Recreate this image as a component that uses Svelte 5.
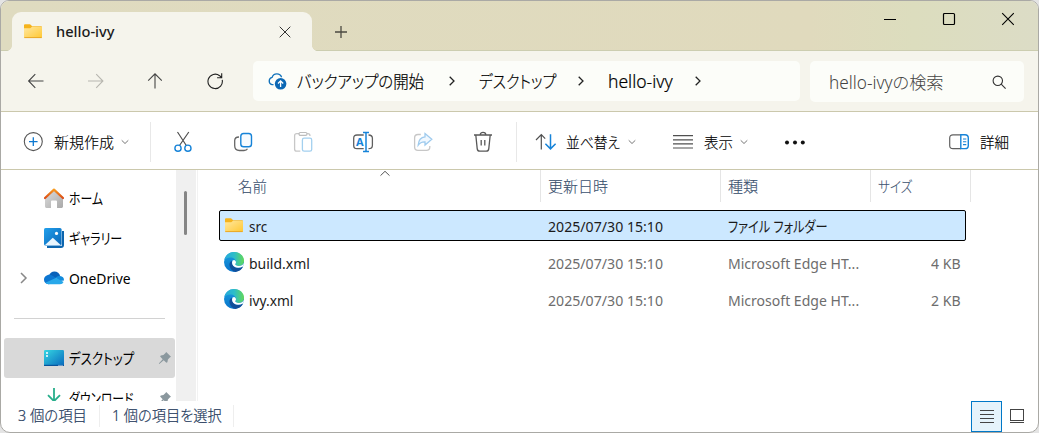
<script>
  const files = [
    { name: 'src', nameWidth: 18, date: '2025/07/30 15:10', type: 'ファイル フォルダー', typeWidth: 100, size: '', icon: 'folder', selected: true },
    { name: 'build.xml', nameWidth: 60.5, date: '2025/07/30 15:10', type: 'Microsoft Edge HT...', typeWidth: 131, size: '4 KB', icon: 'edge' },
    { name: 'ivy.xml', nameWidth: 44, date: '2025/07/30 15:10', type: 'Microsoft Edge HT...', typeWidth: 131, size: '2 KB', icon: 'edge' }
  ];

  function fit(node, width) {
    const natural = node.offsetWidth;
    if (natural) node.style.transform = `scaleX(${width / natural})`;
  }
</script>

{#snippet label(text, width)}
  <span class="label" style="width: {width}px"><span class="glyphs" use:fit={width}>{text}</span></span>
{/snippet}

{#snippet folder()}
  <svg width="20" height="20" viewBox="0 0 20 20">
    <path d="M1 3.2Q1 2.2 2 2.2H6.6Q7.3 2.2 8 3L9 4.2H18Q19 4.2 19 5V8H1Z" fill="#f5b31c" />
    <path d="M1 6.2H7.3L9 4.8H18.2Q19 4.8 19 5.6V15.2Q19 16 18.2 16H1.8Q1 16 1 15.2Z" fill="url(#folderFill)" />
    <path d="M1.3 15.6H18.7" stroke="#e6a323" stroke-width=".9" />
  </svg>
{/snippet}

{#snippet edge()}
  <svg class="edge" width="20" height="20" viewBox="0 0 20 20">
    <circle cx="10" cy="10" r="10" fill="url(#edgeBlue)" />
    <path d="M.3 8.2C1.2 3.2 5.2 0 10.1 0C16 0 20 4.1 20 8.6C20 12 17.6 14 14.8 14C12.4 14 11.2 13 11.2 12.3C11.2 11.8 12 11.5 12 10C12 7.5 9.4 5.5 6.5 5.5C3.6 5.5 1.3 6.8.3 8.2Z" fill="url(#edgeGreen)" />
    <path d="M7.8 8.5C5.5 10 5 12.4 5.8 14.7C6.7 17.4 9 19.4 11.6 19.9C14.8 19.6 17.3 17.9 18.8 15.3C18.9 14.8 18.5 14.7 18 15C13 17.6 7.6 14.7 7.8 8.5Z" fill="#104f9b" />
    <path d="M8.6 8.4Q7.6 10.4 8.3 12.2Q9.7 15.6 14 15.8Q16.4 15.9 18.4 14.8L19.3 14L20 11Q18.4 14 14.8 14C12.4 14 11.2 13 11.2 12.3C11.2 11.8 12 11.5 12 10Q11.7 8.5 10.2 7.9Z" fill="#fff" />
  </svg>
{/snippet}

{#snippet pin()}
  <svg class="pin" width="14" height="14" viewBox="0 0 14 14">
    <path d="M8.2 1L13 5.8L11.8 6.6L9.9 8.6L9.4 11.2L8.4 11.8L5.7 9.2L1.3 13L.8 12.6L4.7 8.2L2.1 5.6L2.8 4.6L5.4 4.1L7.5 2Z" fill="#8b989e" />
  </svg>
{/snippet}

{#snippet chevronDown()}
  <svg class="down" width="10" height="8" viewBox="0 0 10 8"><path d="M1.7 2.3L5 5.5L8.3 2.3" stroke="#777" /></svg>
{/snippet}

{#snippet chevronRight()}
  <svg class="crumb-chevron" width="10" height="12" viewBox="0 0 10 12"><path d="M2.7 1.7L7 6L2.7 10.3" stroke="#222" stroke-width="1.3" /></svg>
{/snippet}

<svg class="defs" width="0" height="0">
  <defs>
    <linearGradient id="folderFill" x1="0" y1="0" x2="1" y2="1"><stop stop-color="#ffe7a0" /><stop offset="1" stop-color="#ffc832" /></linearGradient>
    <linearGradient id="edgeBlue" x1="0" y1="0" x2="0" y2="1"><stop stop-color="#1ba0df" /><stop offset="1" stop-color="#0872ca" /></linearGradient>
    <linearGradient id="edgeGreen"><stop stop-color="#26a9dc" /><stop offset=".5" stop-color="#2dbdc9" /><stop offset="1" stop-color="#63d957" /></linearGradient>
    <linearGradient id="homeFill" x1="0" y1="0" x2="1" y2="1"><stop stop-color="#dedede" /><stop offset="1" stop-color="#a9a9a9" /></linearGradient>
    <linearGradient id="roofFill" x1="0" y1="0" x2="0" y2="1"><stop stop-color="#f79a20" /><stop offset="1" stop-color="#dc4c16" /></linearGradient>
    <linearGradient id="photoFill" x1="0" y1="0" x2="1" y2="1"><stop stop-color="#22a0ec" /><stop offset="1" stop-color="#0965b7" /></linearGradient>
    <linearGradient id="deskFill" x1="0" y1="0" x2="1" y2="1"><stop stop-color="#35d6e2" /><stop offset="1" stop-color="#0868bd" /></linearGradient>
  </defs>
</svg>

<div class="window">
  <header class="titlebar">
    <div class="tab">
      {@render folder()}
      <span class="tab-title">{@render label('hello-ivy', 58.5)}</span>
      <svg width="12" height="12" viewBox="0 0 12 12"><path d="M.7 .7L11.3 11.3M11.3 .7L.7 11.3" stroke="#333" /></svg>
    </div>
    <svg class="add" width="14" height="14" viewBox="0 0 14 14"><path d="M7 1V13M1 7H13" stroke="#4b4a41" stroke-width="1.3" /></svg>
    <div class="controls">
      <svg width="14" height="14" viewBox="0 0 14 14"><path d="M1 7.5H13" stroke="#000" /></svg>
      <svg width="14" height="14" viewBox="0 0 14 14"><rect x="1.5" y="1.5" width="11" height="11" rx="1" stroke="#000" stroke-width="1.2" /></svg>
      <svg width="14" height="14" viewBox="0 0 14 14"><path d="M1.2 1.2L12.8 12.8M12.8 1.2L1.2 12.8" stroke="#000" stroke-width="1.1" /></svg>
    </div>
  </header>

  <nav class="navbar">
    <div class="nav-icons">
      <svg width="18" height="18" viewBox="0 0 18 18"><path d="M16.5 9H2M8.3 2.2L1.6 9L8.3 15.8" stroke="#444" stroke-width="1.1" /></svg>
      <svg width="18" height="18" viewBox="0 0 18 18"><path d="M1 9H15.5M9.2 2.2L15.9 9L9.2 15.8" stroke="#b7b6af" stroke-width="1.1" /></svg>
      <svg width="18" height="18" viewBox="0 0 18 18"><path d="M8 16.5V2M1.2 8.6L8 1.8L14.8 8.6" stroke="#444" stroke-width="1.1" /></svg>
      <svg width="18" height="18" viewBox="0 0 18 18"><path d="M15.2 7.8A7.2 7.2 0 1 1 12.6 3.7L14.6 5.5M14.7 1.2V5.7H10.1" stroke="#222" stroke-width="1.1" /></svg>
    </div>
    <div class="address">
      <svg class="cloud" width="20" height="20" viewBox="0 0 20 20">
        <path d="M5.5 13.6H4A3.7 3.7 0 0 1 4.1 6.4A5 5 0 0 1 13.6 6.2" stroke="#1272bb" stroke-width="1.3" />
        <circle cx="12.6" cy="12.8" r="5.8" fill="#0c68b4" />
        <path d="M12.6 16V10.2M10 12.5L12.6 9.9L15.2 12.5" stroke="#fff" stroke-width="1.3" />
      </svg>
      <span class="crumb root">{@render label('バックアップの開始', 127)}</span>
      {@render chevronRight()}
      <span class="crumb">{@render label('デスクトップ', 77)}</span>
      {@render chevronRight()}
      <span class="crumb">{@render label('hello-ivy', 65)}</span>
      {@render chevronRight()}
    </div>
    <div class="search">
      {@render label('hello-ivyの検索', 115)}
      <svg width="16" height="16" viewBox="0 0 16 16"><circle cx="6.8" cy="6.8" r="4.7" stroke="#333" stroke-width="1.1" /><path d="M10.2 10.2L14.6 14.6" stroke="#333" stroke-width="1.1" /></svg>
    </div>
  </nav>

  <div class="toolbar">
    <div class="new">
      <svg width="24" height="24" viewBox="0 0 24 24"><circle cx="12.3" cy="11.6" r="9" stroke="#555" stroke-width="1.1" /><path d="M12.3 7.3V15.9M8 11.6H16.6" stroke="#0c78d0" stroke-width="1.3" /></svg>
      {@render label('新規作成', 60)}
      {@render chevronDown()}
    </div>
    <div class="actions">
      <svg width="24" height="24" viewBox="0 0 24 24"><path d="M6.5 2L15.3 15.5M17.8 2L8.5 15.5" stroke="#505050" stroke-width="1.2" /><circle cx="7" cy="18.2" r="3.1" stroke="#1683d8" stroke-width="1.4" /><circle cx="16.9" cy="18.2" r="3.1" stroke="#1683d8" stroke-width="1.4" /></svg>
      <svg width="24" height="24" viewBox="0 0 24 24"><path d="M8 7C4.7 7 3.7 8 3.7 10.6V15.8C3.7 19.3 5 20.5 8.4 20.5H13C15 20.5 16 19.8 16.5 18.8" stroke="#666" stroke-width="1.3" /><rect x="9.8" y="3.5" width="10.7" height="13.3" rx="2.8" stroke="#1683d8" stroke-width="1.4" fill="#f6fbff" /></svg>
      <svg width="24" height="24" viewBox="0 0 24 24"><path d="M8 3.7H5.7C4.4 3.7 3.6 4.5 3.6 5.7V19C3.6 20.4 4.4 21.2 5.8 21.2H9.3M16 3.7H17C18.4 3.7 19 4.5 19 6" stroke="#c7c7c7" stroke-width="1.3" /><rect x="8" y="2.5" width="8" height="2.9" rx="1.4" stroke="#bdbdbd" stroke-width="1.2" /><rect x="11.4" y="8.2" width="9.3" height="13" rx="1.8" stroke="#a3d0ef" stroke-width="1.3" /></svg>
      <svg width="24" height="24" viewBox="0 0 24 24"><path d="M12.7 5H6C3.8 5 2.7 6.1 2.7 8.2V15.4C2.7 17.6 3.8 18.6 6 18.6H12.7M17.5 5C20.2 5 21.4 6.1 21.4 8.2V15.4C21.4 17.6 20.2 18.6 17.5 18.6" stroke="#606060" stroke-width="1.3" /><path d="M12 2.4H18M12 21.6H18M15 2.4V21.6" stroke="#1683d8" stroke-width="1.5" /><text x="5" y="16" class="rename-a">A</text></svg>
      <svg width="24" height="24" viewBox="0 0 24 24"><path d="M9.8 4.5H7C4.8 4.5 3.6 5.7 3.6 8V17C3.6 19.2 4.8 20.3 7 20.3H15.4C17.6 20.3 18.8 19.2 18.8 17V16" stroke="#c7c7c7" stroke-width="1.3" /><path d="M14 3.6L20.8 9.3L14 15V11.8C10.7 11.6 8.8 12.7 7.2 15.1C7.5 10.4 9.4 7.2 14 6.8Z" stroke="#9fcbee" stroke-width="1.3" fill="#f0f8ff" /></svg>
      <svg width="24" height="24" viewBox="0 0 24 24"><path d="M3 5H21M4.8 5L6.2 18.6C6.4 20.4 7.2 21.2 8.8 21.2H15.2C16.8 21.2 17.6 20.4 17.8 18.6L19.2 5M9.2 4.8C9.2 1.6 14.8 1.6 14.8 4.8M10.2 10V15.5M13.8 10V15.5" stroke="#585858" stroke-width="1.3" /></svg>
    </div>
    <div class="sort">
      <svg width="24" height="24" viewBox="0 0 24 24"><path d="M7.3 19.6V4.8M2 10L7.3 4.7L11.2 8.7" stroke="#505050" stroke-width="1.2" /><path d="M16.5 4.3V19M11.4 13.7L16.5 18.9L21.6 13.7" stroke="#1683d8" stroke-width="1.5" /></svg>
      {@render label('並べ替え', 54)}
      {@render chevronDown()}
    </div>
    <div class="view">
      <svg width="24" height="24" viewBox="0 0 24 24"><path d="M2 5.7H22M2 9.8H22M2 13.9H22M2 18H22" stroke="#505050" stroke-width="1.2" /></svg>
      {@render label('表示', 29)}
      {@render chevronDown()}
    </div>
    <svg class="more" width="24" height="24" viewBox="0 0 24 24"><circle cx="4" cy="12.5" r="2" fill="#111" /><circle cx="12" cy="12.5" r="2" fill="#111" /><circle cx="19.8" cy="12.5" r="2" fill="#111" /></svg>
    <div class="details">
      <svg width="24" height="24" viewBox="0 0 24 24"><path d="M14 4.8H6C3.8 4.8 2.7 5.9 2.7 8V15.4C2.7 17.5 3.8 18.6 6 18.6H14" stroke="#606060" stroke-width="1.2" /><path d="M13.8 4.8H18C20.2 4.8 21.3 5.9 21.3 8V15.4C21.3 17.5 20.2 18.6 18 18.6H13.8Z" stroke="#1683d8" stroke-width="1.4" /><path d="M16 9H19.3M16 11.8H19.3M16 14.6H19.3" stroke="#1683d8" stroke-width="1.1" /></svg>
      {@render label('詳細', 29)}
    </div>
  </div>

  <div class="body">
    <aside class="tree">
      <div class="item">
        <svg width="20" height="20" viewBox="0 0 20 20"><path d="M1 9L10 1.5L19 9V18.6Q19 20 17.6 20H13V13.5Q13 12.5 12 12.5H8Q7 12.5 7 13.5V20H2.4Q1 20 1 18.6Z" fill="url(#homeFill)" /><path d="M1 10L10 1.6L19 10" stroke="url(#roofFill)" stroke-width="2.2" stroke-linecap="round" stroke-linejoin="round" /></svg>
        {@render label('ホーム', 34)}
      </div>
      <div class="item">
        <svg width="20" height="20" viewBox="0 0 20 20"><path d="M3 19H17Q19 19 19 17V3" stroke="#0d65ae" stroke-width="2" /><rect width="17.6" height="17.6" rx="1.6" fill="url(#photoFill)" /><circle cx="12.5" cy="5.4" r="1.6" fill="#fff" /><path d="M1 16.9L8.8 9.7L16.7 16.9Z" fill="#eaf6fe" /></svg>
        {@render label('ギャラリー', 53)}
      </div>
      <div class="item">
        <svg class="expand" width="10" height="14" viewBox="0 0 10 14"><path d="M2 2L7 7L2 12" stroke="#888" stroke-width="1.5" /></svg>
        <svg width="20" height="20" viewBox="0 0 20 20"><path d="M5 7.2C6 4.7 8 3.4 10.3 3.4C13.3 3.4 15.6 5.4 16.2 8.2L10 11Z" fill="#0861ba" /><path d="M4.6 16.2C1.7 16.2 0 14.2 0 11.8C0 9 2.2 6.7 5.4 6.7C7.7 6.7 9.2 8 12.2 10L8 15.5Z" fill="#0c76d1" /><path d="M11.6 9.6Q13.4 7.7 16 8.1Q20 8.6 20 12.4L14 13.2Z" fill="#128bdc" /><path d="M1.3 14.8L11.2 10.2Q12.2 9.8 13.2 10.5L19.6 14Q18.6 16.2 16 16.2H4.6Q2.5 16.2 1.3 14.8Z" fill="#28a8ea" /></svg>
        {@render label('OneDrive', 62)}
      </div>
      <div class="divider"></div>
      <div class="item current">
        <svg width="20" height="20" viewBox="0 0 20 20"><rect y="2" width="20" height="16" rx="1.3" fill="url(#deskFill)" /><path d="M0 17.4H20" stroke="#08539b" stroke-width="1.2" /><path d="M2 5H4M2 8H4" stroke="#fff" stroke-width="1.7" /><path d="M14.5 17.4H19" stroke="#def" stroke-dasharray="1 1" /></svg>
        {@render label('デスクトップ', 65)}
        {@render pin()}
      </div>
      <div class="item">
        <svg width="20" height="20" viewBox="0 0 20 20"><path d="M10 0V13M4 7.2L10 13.2L16 7.2" stroke="#27ae8b" stroke-width="1.8" /></svg>
        {@render label('ダウンロード', 64.5)}
        {@render pin()}
      </div>
    </aside>
    <div class="scrollbar"><div class="thumb"></div></div>

    <main class="files">
      <div class="head">
        <div class="col name">{@render label('名前', 29)}
          <svg class="sorted" width="12" height="7" viewBox="0 0 12 7"><path d="M1.5 5.6L6 1.3L10.5 5.6" stroke="#555" /></svg>
        </div>
        <div class="col">{@render label('更新日時', 60)}</div>
        <div class="col type">{@render label('種類', 30)}</div>
        <div class="col size">{@render label('サイズ', 34.5)}</div>
      </div>
      {#each files as file}
        <div class="row" class:selected={file.selected}>
          <div class="cell name">
            {#if file.icon === 'folder'}{@render folder()}{:else}{@render edge()}{/if}
            {@render label(file.name, file.nameWidth)}
          </div>
          <div class="cell date">{@render label(file.date, 115)}</div>
          <div class="cell kind">{@render label(file.type, file.typeWidth)}</div>
          <div class="cell bytes">{#if file.size}{@render label(file.size, 30)}{/if}</div>
        </div>
      {/each}
    </main>
  </div>

  <footer class="status">
    <div class="count">{@render label('3 個の項目', 69)}</div>
    <div class="picked">{@render label('1 個の項目を選択', 110)}</div>
    <div class="modes">
      <div class="mode active"><svg width="16" height="16" viewBox="0 0 16 16"><path d="M1 2.5H15M1 6.5H15M1 10.5H15M1 14.5H15" stroke="#444" /></svg></div>
      <div class="mode"><svg width="16" height="16" viewBox="0 0 16 16"><rect x="1.5" y="1.5" width="13" height="11" stroke="#444" /><path d="M1 14.5H15" stroke="#444" /></svg></div>
    </div>
  </footer>
</div>

<style>
  :global(body) { background: #e4e4e4; overflow: hidden; }
  :global(#app) { display: flow-root; }
  svg { fill: none; flex: none; display: block; }
  .defs { position: absolute; }
  .window {
    box-sizing: border-box; width: 1039px; height: 433px; display: flex; flex-direction: column;
    border: 1px solid #aaa9a5; border-radius: 9px 9px 10px 10px; overflow: hidden; background: #fff;
    font: 15px/20px "Noto Sans", "Noto Sans CJK JP", sans-serif; color: #1b1b1b;
  }
  .label { display: inline-block; flex: none; white-space: nowrap; }
  .glyphs { display: inline-block; transform-origin: 0 50%; font-feature-settings: "palt"; }

  .titlebar { box-sizing: border-box; height: 50px; flex: none; display: flex; padding: 11px 0 0 11px; background: linear-gradient(90deg, #dfdbc0 0%, #e0dabd 78%, #dcddbe 88%, #dcdcc6 100%); box-shadow: inset 0 -1px #cccdb0; }
  .tab { position: relative; box-sizing: border-box; width: 300px; height: 39px; display: flex; align-items: center; padding: 0 21px 0 11px; border-radius: 9px 9px 0 0; background: #f5f4ec; }
  .tab::before, .tab::after { content: ""; position: absolute; bottom: 0; width: 5px; height: 5px; }
  .tab::before { left: -5px; background: radial-gradient(circle at 0 0, transparent 4.5px, #f5f4ec 5px); }
  .tab::after { right: -5px; background: radial-gradient(circle at 100% 0, transparent 4.5px, #f5f4ec 5px); }
  .tab-title { flex: 1; padding: 0 0 2px 13px; font-weight: 500; }
  .add { margin: 13px 0 0 22px; }
  .controls { margin-left: auto; display: flex; gap: 45px; padding-right: 23px; }

  .navbar { box-sizing: border-box; height: 61px; flex: none; display: flex; align-items: flex-start; padding: 10px 14px 0 26px; background: #f5f4ec; border-bottom: 1px solid #cbc8ac; font-size: 17.5px; font-weight: 300; color: #000; }
  .nav-icons { display: flex; align-items: center; gap: 42px; height: 40px; width: 226px; }
  .address { box-sizing: border-box; width: 547px; height: 40px; display: flex; align-items: center; padding-left: 15px; border-radius: 5px; background: #fcfdf9; }
  .cloud { margin-right: 9px; }
  .crumb { display: flex; padding-bottom: 1px; -webkit-text-stroke: .2px #000; }
  .crumb.root { padding-right: 3px; }
  .crumb-chevron { margin: 0 22px 0 20px; }
  .search { box-sizing: border-box; width: 214px; height: 41px; margin-left: 10px; padding: 0 17px 0 19px; display: flex; align-items: center; justify-content: space-between; border-radius: 5px; background: #fcfdf9; color: #444; }

  .toolbar { box-sizing: border-box; height: 58px; flex: none; display: flex; align-items: center; border-bottom: 1px solid #cbc8ac; padding-top: 2px; background: #fff; font-weight: 300; color: #000; -webkit-text-stroke: .15px #000; }
  .new, .sort, .view, .details { display: flex; align-items: center; }
  .new { box-sizing: border-box; width: 150px; height: 40px; padding-left: 20px; gap: 9px; border-right: 1px solid #e8e8e8; }
  .down { margin-left: -3px; }
  .actions { display: flex; gap: 36px; padding: 0 21px 0 20px; height: 40px; align-items: center; margin-right: 17px; border-right: 1px solid #e8e8e8; }
  .rename-a { font: 700 11px "Noto Sans", sans-serif; fill: #1683d8; -webkit-text-stroke: 0; }
  .sort { gap: 8px; }
  .sort .down { margin-left: -1px; }
  .view { gap: 9px; margin-left: 34px; }
  .view .down { margin-left: -3px; }
  .more { margin-left: 34px; }
  .details { margin-left: auto; padding-right: 29px; gap: 9px; }

  .body { height: 231px; flex: none; display: flex; overflow: hidden; }
  .tree { box-sizing: border-box; width: 175px; padding-top: 8px; color: #000; }
  .item { position: relative; box-sizing: border-box; height: 40px; display: flex; align-items: center; gap: 5px; padding: 0 4px 0 43px; }
  .expand { position: absolute; left: 18px; top: 13px; }
  .divider { height: 1px; margin: 20px 11px 19px 13px; background: #d2d2d2; }
  .current::before { content: ""; position: absolute; inset: 0 1px 0 3px; border-radius: 3px; background: #d9d9d9; z-index: -1; }
  .current { z-index: 0; }
  .pin { margin-left: auto; }
  .scrollbar { width: 20px; background: #f0f0f0; }
  .thumb { width: 3px; height: 44px; margin: 21px 0 0 8px; border-radius: 2px; background: #858585; }
  .files { width: 840px; margin-left: 1px; border-left: 1px solid #f2f2f2; }

  .head { height: 32px; display: flex; padding-left: 22px; margin-bottom: 8px; color: #3a506e; font-weight: 300; -webkit-text-stroke: .12px #3a506e; }
  .col { position: relative; box-sizing: border-box; width: 180px; padding: 6px 0 0 7px; border-right: 1px solid #e5e5e5; }
  .col.name { width: 321px; padding-left: 18px; }
  .col.type { width: 150px; }
  .col.size { width: 100px; }
  .sorted { position: absolute; left: 159px; top: 0; }
  .row { box-sizing: border-box; width: 747px; height: 31px; margin: 0 0 6px 21px; border: 1px solid transparent; border-radius: 2px; display: flex; align-items: center; color: #6d6d6d; }
  .row.selected { background: #cce8ff; border-color: #000; color: #1b1b1b; }
  .cell.name { box-sizing: border-box; width: 328px; padding-left: 4px; display: flex; align-items: center; gap: 5px; color: #1b1b1b; }
  .edge { margin-top: -2px; }
  .cell.date { width: 180px; }
  .cell.kind { width: 150px; }
  .bytes { margin-left: auto; padding-right: 4px; }

  .status { height: 30px; flex: none; display: flex; align-items: center; color: #1e395b; font-weight: 300; -webkit-text-stroke: .2px #1e395b; }
  .count { box-sizing: border-box; width: 99px; padding-left: 17px; border-right: 1px solid #eee; height: 22px; }
  .picked { width: 121px; padding-left: 12px; border-right: 1px solid #eee; height: 22px; }
  .modes { margin-left: auto; display: flex; padding-right: 6px; }
  .mode { box-sizing: border-box; width: 30px; height: 31px; display: grid; place-items: center; }
  .mode.active { width: 31px; border: 1px solid #0078c8; background: #e5f3fb; }
</style>
